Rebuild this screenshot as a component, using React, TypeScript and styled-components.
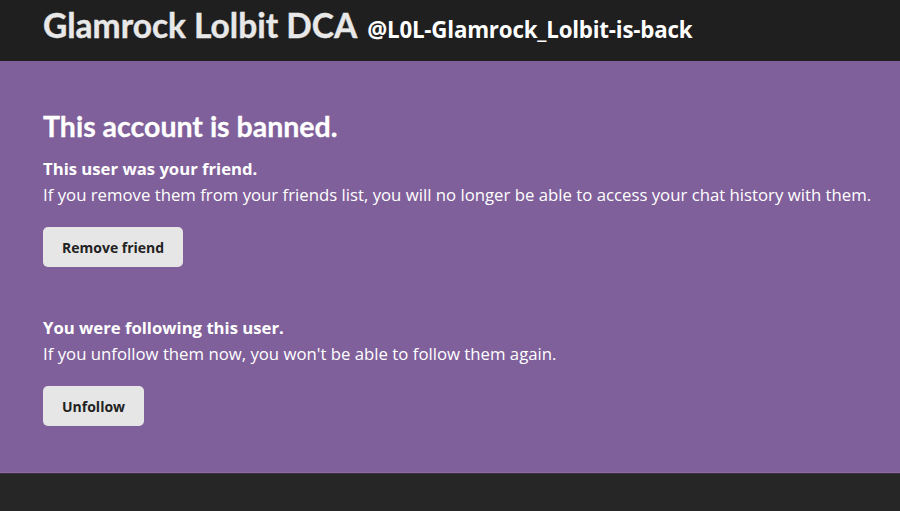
import React from "react";
import styled, { createGlobalStyle } from "styled-components";

const Global = createGlobalStyle`
  html, body { margin: 0; padding: 0; background: #262626; }
  body { font-family: "Open Sans", "Noto Sans", sans-serif; }
`;

const Page = styled.div`
  display: flex;
  flex-direction: column;
  min-height: 511px;
  background: #262626;
`;

const Header = styled.header`
  display: flex;
  align-items: baseline;
  gap: 10px;
  height: 61px;
  box-sizing: border-box;
  padding: 2px 43px 0;
  background: #1f1f1f;
  white-space: nowrap;
`;

const Title = styled.h1`
  margin: 0;
  font-family: Lato, sans-serif;
  font-weight: 700;
  font-size: 33.5px;
  color: #e8e8e8;
  line-height: 46px;
  -webkit-text-stroke: 0.4px #e8e8e8;
`;

const Handle = styled.span`
  font-family: "Open Sans", sans-serif;
  font-weight: 700;
  font-size: 22.3px;
  letter-spacing: -0.2px;
  color: #ffffff;
`;

const Panel = styled.main`
  background: #80609a;
  padding: 47px 0 46px 43px;
  border-bottom: 1px solid #8d6ba7;
  box-shadow: 0 1px 0 #3a3140;
`;

const Banned = styled.h2`
  margin: 0 0 12px;
  font-family: Lato, sans-serif;
  font-weight: 700;
  font-size: 28.5px;
  line-height: 36px;
  color: #ffffff;
  -webkit-text-stroke: 0.3px #ffffff;
`;

const Section = styled.section<{ $gap?: number }>`
  display: flex;
  flex-direction: column;
  align-items: flex-start;
  margin-top: ${(p) => p.$gap ?? 0}px;
`;

const SubHead = styled.h3`
  margin: 0;
  font-family: "Open Sans", sans-serif;
  font-weight: 700;
  font-size: 16.7px;
  line-height: 25px;
  color: #ffffff;
`;

const Body = styled.p`
  margin: 0;
  font-family: "Open Sans", sans-serif;
  font-size: 16.75px;
  line-height: 27px;
  color: #ffffff;
  white-space: nowrap;
`;

const Button = styled.button`
  margin-top: 19px;
  height: 40px;
  padding: 0 19px;
  border: none;
  border-radius: 5px;
  background: #e6e6e6;
  color: #222222;
  font-family: "Open Sans", sans-serif;
  font-weight: 700;
  font-size: 14px;
  cursor: pointer;
`;

export default function App() {
  return (
    <Page>
      <Global />
      <Header>
        <Title>Glamrock Lolbit DCA</Title>
        <Handle>@L0L-Glamrock_Lolbit-is-back</Handle>
      </Header>
      <Panel>
        <Banned>This account is banned.</Banned>
        <Section>
          <SubHead>This user was your friend.</SubHead>
          <Body>
            If you remove them from your friends list, you will no longer be able to access your chat history with them.
          </Body>
          <Button>Remove friend</Button>
        </Section>
        <Section $gap={48}>
          <SubHead>You were following this user.</SubHead>
          <Body>If you unfollow them now, you won't be able to follow them again.</Body>
          <Button>Unfollow</Button>
        </Section>
      </Panel>
    </Page>
  );
}
